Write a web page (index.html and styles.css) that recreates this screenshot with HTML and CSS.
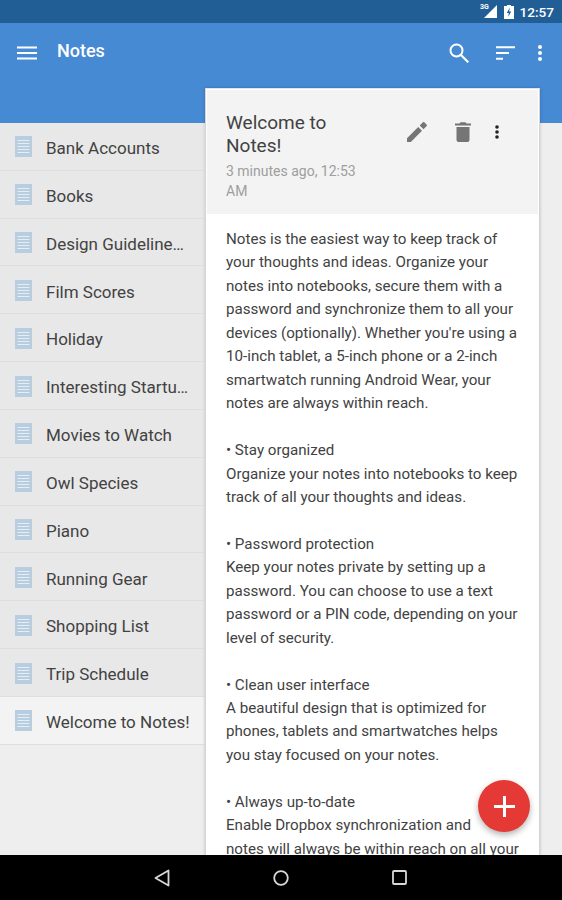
FILE: index.html
```html
<!DOCTYPE html>
<html lang="en">
<head>
<meta charset="utf-8">
<title>Notes</title>
<link rel="stylesheet" href="styles.css">
</head>
<body>
<div class="shell">
  <div class="status">
    <span class="net">3G</span>
    <svg class="sig" viewBox="0 0 13 13" width="13" height="13"><path d="M13 0V13H0Z" fill="#fff"/></svg>
    <svg class="bat" viewBox="0 0 10 14" width="10" height="14"><path d="M3 0h4v1h3V14H0V1h3Z" fill="#fff"/><path d="M5.800 2.500 2.800 8h2L4.200 12l3-5.500H5.200Z" fill="#225e96"/></svg>
    <span class="clock">12:57</span>
  </div>
  <header class="toolbar">
    <svg class="tb-menu" viewBox="0 0 20 14" width="20" height="14"><path d="M0 1.500h20M0 7h20M0 12.500h20" stroke="#fff" stroke-width="1.800"/></svg>
    <span class="tb-title">Notes</span>
    <svg class="tb-search" viewBox="0 0 20 20" width="20" height="20"><circle cx="7.500" cy="7.500" r="6" fill="none" stroke="#fff" stroke-width="2"/><path d="M12 12l7.300 7.300" stroke="#fff" stroke-width="2.200"/></svg>
    <svg class="tb-sort" viewBox="0 0 19 14" width="19" height="14"><path d="M0 1.200h19M0 7h13M0 12.800h7" stroke="#fff" stroke-width="2"/></svg>
    <svg class="tb-more" viewBox="0 0 4 16" width="4" height="16"><circle cx="2" cy="2" r="2" fill="#fff"/><circle cx="2" cy="8" r="2" fill="#fff"/><circle cx="2" cy="14" r="2" fill="#fff"/></svg>
  </header>
  <ul class="list">
    <li class="row"><svg class="doc" viewBox="0 0 17 21"><use href="#doc"/></svg><span class="name">Bank Accounts</span></li>
    <li class="row"><svg class="doc" viewBox="0 0 17 21"><use href="#doc"/></svg><span class="name">Books</span></li>
    <li class="row"><svg class="doc" viewBox="0 0 17 21"><use href="#doc"/></svg><span class="name">Design Guideline…</span></li>
    <li class="row"><svg class="doc" viewBox="0 0 17 21"><use href="#doc"/></svg><span class="name">Film Scores</span></li>
    <li class="row"><svg class="doc" viewBox="0 0 17 21"><use href="#doc"/></svg><span class="name">Holiday</span></li>
    <li class="row"><svg class="doc" viewBox="0 0 17 21"><use href="#doc"/></svg><span class="name">Interesting Startu…</span></li>
    <li class="row"><svg class="doc" viewBox="0 0 17 21"><use href="#doc"/></svg><span class="name">Movies to Watch</span></li>
    <li class="row"><svg class="doc" viewBox="0 0 17 21"><use href="#doc"/></svg><span class="name">Owl Species</span></li>
    <li class="row"><svg class="doc" viewBox="0 0 17 21"><use href="#doc"/></svg><span class="name">Piano</span></li>
    <li class="row"><svg class="doc" viewBox="0 0 17 21"><use href="#doc"/></svg><span class="name">Running Gear</span></li>
    <li class="row"><svg class="doc" viewBox="0 0 17 21"><use href="#doc"/></svg><span class="name">Shopping List</span></li>
    <li class="row"><svg class="doc" viewBox="0 0 17 21"><use href="#doc"/></svg><span class="name">Trip Schedule</span></li>
    <li class="row selected"><svg class="doc" viewBox="0 0 17 21"><use href="#doc"/></svg><span class="name">Welcome to Notes!</span></li>
  </ul>
  <article class="card">
    <div class="card-head">
      <div class="card-heading">
        <h1 class="card-title">Welcome to Notes!</h1>
        <p class="card-time">3 minutes ago, 12:53 AM</p>
      </div>
      <svg class="ic-edit" viewBox="0 0 20 20" width="20" height="20"><path d="M0 16.200V20h3.800L15 8.800 11.200 5ZM19.700 4.100a1 1 0 0 0 0-1.400L17.300.3a1 1 0 0 0-1.400 0l-3.200 3.200 3.800 3.800Z" fill="#757575"/></svg>
      <svg class="ic-trash" viewBox="0 0 16 20" width="16" height="20"><path d="M1.500 5h13v13a2 2 0 0 1-2 2h-9a2 2 0 0 1-2-2ZM0 1.500h4.500l1-1.200h5l1 1.200H16v2H0Z" fill="#757575"/></svg>
      <svg class="ic-more" viewBox="0 0 4 14" width="4" height="14"><circle cx="2" cy="2" r="1.800" fill="#222"/><circle cx="2" cy="7" r="1.800" fill="#222"/><circle cx="2" cy="12" r="1.800" fill="#222"/></svg>
    </div>
    <div class="card-body">
      <p>Notes is the easiest way to keep track of<br>your thoughts and ideas. Organize your<br>notes into notebooks, secure them with a<br>password and synchronize them to all your<br>devices (optionally). Whether you're using a<br>10-inch tablet, a 5-inch phone or a 2-inch<br>smartwatch running Android Wear, your<br>notes are always within reach.</p>
      <p>• Stay organized<br>Organize your notes into notebooks to keep<br>track of all your thoughts and ideas.</p>
      <p>• Password protection<br>Keep your notes private by setting up a<br>password. You can choose to use a text<br>password or a PIN code, depending on your<br>level of security.</p>
      <p>• Clean user interface<br>A beautiful design that is optimized for<br>phones, tablets and smartwatches helps<br>you stay focused on your notes.</p>
      <p>• Always up-to-date<br>Enable Dropbox synchronization and<br>notes will always be within reach on all your</p>
    </div>
  </article>
  <div class="fab"><svg viewBox="0 0 21 21" width="21" height="21"><path d="M10.500 0v21M0 10.500h21" stroke="#fff" stroke-width="3"/></svg></div>
  <nav class="navbar">
    <svg viewBox="0 0 16 18" width="16" height="18"><path d="M14.500 1.500v15L1.500 9Z" fill="none" stroke="#d8d8d8" stroke-width="1.800" stroke-linejoin="round"/></svg>
    <svg viewBox="0 0 16 16" width="16" height="16"><circle cx="8" cy="8" r="6.800" fill="none" stroke="#d8d8d8" stroke-width="1.800"/></svg>
    <svg viewBox="0 0 15 15" width="15" height="15"><rect x="1" y="1" width="13" height="13" rx="1" fill="none" stroke="#d8d8d8" stroke-width="1.800"/></svg>
  </nav>
</div>
<svg class="defs" width="0" height="0"><symbol id="doc" viewBox="0 0 17 21"><rect width="17" height="21" fill="#b8cde0"/><path d="M2.500 4.500h12M2.500 7.500h12M2.500 10.500h12M2.500 13.500h12M2.500 16.500h12" stroke="#e6edf3" stroke-width="1"/></symbol></svg>
</body>
</html>
```

FILE: styles.css
```css
* { box-sizing: border-box; }
html, body { margin: 0; padding: 0; }
body { font-family: Roboto, "Noto Sans", sans-serif; background: #eeeeee; }
.defs { position: absolute; }
.shell {
  position: relative;
  width: 562px;
  height: 900px;
  overflow: hidden;
  display: grid;
  grid-template-columns: 205px 335px 22px;
  grid-template-rows: 23px 100px 732px 45px;
  background: #eeeeee;
}
.status {
  grid-column: 1 / -1;
  grid-row: 1;
  background: #225e96;
  display: flex;
  align-items: center;
  justify-content: flex-end;
  padding-right: 8px;
  position: relative;
  color: #fff;
}
.sig { margin-right: 7px; }
.net { position: absolute; left: 480px; top: 3px; font-size: 7px; line-height: 8px; font-weight: 700; }
.bat { margin-right: 6px; }
.clock { font-size: 13.600px; font-weight: 500; }
.toolbar {
  grid-column: 1 / -1;
  grid-row: 2;
  background: #468ad3;
  display: flex;
  align-items: flex-start;
  color: #fff;
}
.tb-menu { margin: 23px 0 0 17px; }
.tb-title { margin: 15px 0 0 20px; font-size: 18px; font-weight: 500; line-height: 26px; }
.tb-search { margin: 20px 0 0 auto; }
.tb-sort { margin: 23px 0 0 27px; }
.tb-more { margin: 22px 20px 0 23px; }
.list {
  grid-column: 1;
  grid-row: 3;
  list-style: none;
  margin: 0;
  padding: 0;
  width: 204px;
}
.row {
  height: 47.830px;
  display: flex;
  align-items: center;
  background: #e8e8e8;
  border-bottom: 1px solid #dedede;
  padding-left: 15px;
}
.row.selected { background: #f3f3f3; }
.doc { width: 17px; height: 21px; flex: none; margin-top: 1px; }
.name { margin: 3.300px 0 0 14px; font-size: 17px; color: #424242; white-space: nowrap; }
.card {
  grid-column: 2;
  grid-row: 2 / 4;
  margin-top: 65px;
  background: #fff;
  overflow: hidden;
  border-left: 1px solid #d4d4d4;
  border-right: 1px solid #d4d4d4;
  border-top: 1px solid #dde6f0;
  box-shadow: 0 0 3px rgba(0, 0, 0, 0.2);
}
.card-head {
  height: 124px;
  margin: 1px 1px 0;
  background: #f3f3f3;
  display: flex;
  align-items: flex-start;
  padding-left: 19px;
}
.card-heading { width: 150px; flex: none; }
.card-title { margin: 22px 0 0; font-size: 19px; font-weight: 400; line-height: 22.500px; color: #424242; }
.card-time { margin: 3.500px 0 0; font-size: 14px; line-height: 20px; color: #9e9e9e; }
.ic-edit { margin: 32px 0 0 31px; }
.ic-trash { margin: 32px 0 0 28px; }
.ic-more { margin: 35px 0 0 24px; }
.card-body {
  padding: 14px 0 0 20px;
  font-size: 15.150px;
  line-height: 23.450px;
  color: #424242;
  white-space: nowrap;
}
.card-body p { margin: 0 0 23.450px; }
.fab {
  position: absolute;
  left: 478px;
  top: 780px;
  width: 52px;
  height: 52px;
  border-radius: 50%;
  background: #e53935;
  display: flex;
  align-items: center;
  justify-content: center;
  box-shadow: 0 3px 6px rgba(0, 0, 0, 0.3);
}
.navbar {
  grid-column: 1 / -1;
  grid-row: 4;
  background: #000;
  display: flex;
  align-items: center;
  padding: 0 0 0 154px;
  gap: 103px;
  z-index: 1;
}
```
